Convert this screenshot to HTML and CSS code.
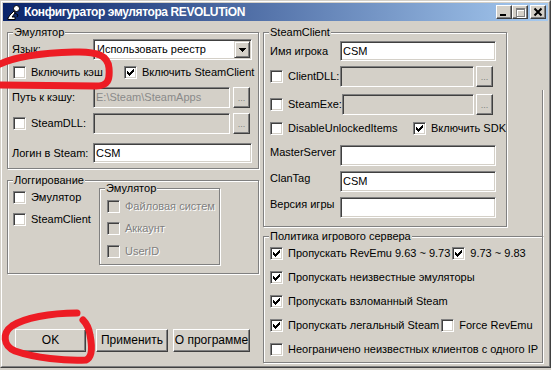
FILE: index.html
```html
<!DOCTYPE html>
<html lang="ru">
<head>
  <meta charset="UTF-8">
  <meta name="viewport" content="width=device-width, initial-scale=1.0">
  <title>Конфигуратор эмулятора REVOLUTiON</title>
  <link rel="stylesheet" href="styles.css">
</head>
<body>
  <div class="window">
    <div class="frame">
      <div class="titlebar">
        <svg class="app-icon" width="16" height="16" viewBox="0 0 16 16">
          <circle cx="11.5" cy="4.5" r="3" fill="#fff" stroke="#000"/>
          <path d="M9 7 L5 11 L3 14 L3 15.5 L10 15.5 L10 13 L7 13 L10 9 Z" fill="#fff" stroke="#000" stroke-linejoin="round"/>
          <path d="M10 9 L13 11 L12 13" fill="none" stroke="#000"/>
        </svg>
        <span class="title">Конфигуратор эмулятора REVOLUTiON</span>
        <div class="caption">
          <span class="cap-btn">
            <svg width="14" height="12" viewBox="0 0 14 12" shape-rendering="crispEdges"><rect x="3" y="8" width="6" height="2" fill="#000"/></svg>
          </span>
          <span class="cap-btn">
            <svg width="14" height="12" viewBox="0 0 14 12" shape-rendering="crispEdges">
              <path d="M3 2h9v9h-9z M4 4v6h7v-6z" fill="#fff" fill-rule="evenodd" transform="translate(1 1)"/>
              <path d="M3 2h9v9h-9z M4 4v6h7v-6z" fill="#808080" fill-rule="evenodd"/>
            </svg>
          </span>
          <span class="cap-btn close">
            <svg width="14" height="12" viewBox="0 0 14 12"><path d="M3.5 2.5 L10.5 9.5 M10.5 2.5 L3.5 9.5" stroke="#000" stroke-width="2" fill="none"/></svg>
          </span>
        </div>
      </div>

      <div class="client">
        <div class="col-left">
          <div class="group emu">
            <span class="legend">Эмулятор</span>
            <div class="row lang">
              <span class="lbl">Язык:</span>
              <div class="combo">
                <span class="combo-text">Использовать реестр</span>
                <span class="drop"><svg width="7" height="4" viewBox="0 0 7 4" shape-rendering="crispEdges"><path d="M0 0h7v1h-1v1h-1v1h-1v1h-1v-1h-1v-1h-1v-1h-1z" fill="#000"/></svg></span>
              </div>
            </div>
            <div class="row checks">
              <label class="check cache"><span class="cb"></span>Включить кэш</label>
              <label class="check"><span class="cb"><svg width="7" height="7" viewBox="0 0 7 7" shape-rendering="crispEdges"><path d="M6 0h1v3h-1v1h-1v1h-1v1h-1v1h-1v-1h-1v-1h-1v-3h1v1h1v1h1v-1h1v-1h1z" fill="#000"/></svg></span>Включить SteamClient</label>
            </div>
            <div class="row path">
              <span class="lbl">Путь к кэшу:</span>
              <div class="edit off short">E:\Steam\SteamApps</div>
              <span class="browse">...</span>
            </div>
            <div class="row path dll">
              <label class="lbl check"><span class="cb"></span>SteamDLL:</label>
              <div class="edit off short"></div>
              <span class="browse">...</span>
            </div>
            <div class="row login">
              <span class="lbl">Логин в Steam:</span>
              <div class="edit wide">CSM</div>
            </div>
          </div>

          <div class="group log">
            <span class="legend">Логгирование</span>
            <div class="log-body">
              <div class="log-checks">
                <label class="check"><span class="cb"></span>Эмулятор</label>
                <label class="check"><span class="cb"></span>SteamClient</label>
              </div>
              <div class="group sub">
                <span class="legend">Эмулятор</span>
                <label class="check off"><span class="cb"></span>Файловая систем</label>
                <label class="check off"><span class="cb"></span>Аккаунт</label>
                <label class="check off"><span class="cb"></span>UserID</label>
              </div>
            </div>
          </div>

          <div class="buttons">
            <span class="btn ok">OK</span>
            <span class="btn apply">Применить</span>
            <span class="btn about">О программе</span>
          </div>
        </div>

        <div class="col-right">
          <div class="top-row">
            <div class="group steam">
              <span class="legend">SteamClient</span>
              <div class="row name">
                <span class="lbl">Имя игрока</span>
                <div class="edit wide">CSM</div>
              </div>
              <div class="row file">
                <label class="lbl check"><span class="cb"></span>ClientDLL:</label>
                <div class="edit off"></div>
                <span class="browse">...</span>
              </div>
              <div class="row file exe">
                <label class="lbl check"><span class="cb"></span>SteamExe:</label>
                <div class="edit off"></div>
                <span class="browse">...</span>
              </div>
              <div class="row checks">
                <label class="check unlocked"><span class="cb"></span>DisableUnlockedItems</label>
                <label class="check"><span class="cb"><svg width="7" height="7" viewBox="0 0 7 7" shape-rendering="crispEdges"><path d="M6 0h1v3h-1v1h-1v1h-1v1h-1v1h-1v-1h-1v-1h-1v-3h1v1h1v1h1v-1h1v-1h1z" fill="#000"/></svg></span>Включить SDK</label>
              </div>
              <div class="row field first">
                <span class="lbl">MasterServer</span>
                <div class="edit wide"></div>
              </div>
              <div class="row field">
                <span class="lbl">ClanTag</span>
                <div class="edit wide">CSM</div>
              </div>
              <div class="row field">
                <span class="lbl">Версия игры</span>
                <div class="edit wide"></div>
              </div>
            </div>
            <div class="ghost"></div>
          </div>

          <div class="group policy">
            <span class="legend">Политика игрового сервера</span>
            <div class="prow">
              <label class="check"><span class="cb"><svg width="7" height="7" viewBox="0 0 7 7" shape-rendering="crispEdges"><path d="M6 0h1v3h-1v1h-1v1h-1v1h-1v1h-1v-1h-1v-1h-1v-3h1v1h1v1h1v-1h1v-1h1z" fill="#000"/></svg></span>Пропускать RevEmu 9.63 ~ 9.73</label>
              <label class="check tight"><span class="cb"><svg width="7" height="7" viewBox="0 0 7 7" shape-rendering="crispEdges"><path d="M6 0h1v3h-1v1h-1v1h-1v1h-1v1h-1v-1h-1v-1h-1v-3h1v1h1v1h1v-1h1v-1h1z" fill="#000"/></svg></span>9.73 ~ 9.83</label>
            </div>
            <div class="prow">
              <label class="check"><span class="cb"><svg width="7" height="7" viewBox="0 0 7 7" shape-rendering="crispEdges"><path d="M6 0h1v3h-1v1h-1v1h-1v1h-1v1h-1v-1h-1v-1h-1v-3h1v1h1v1h1v-1h1v-1h1z" fill="#000"/></svg></span>Пропускать неизвестные эмуляторы</label>
            </div>
            <div class="prow">
              <label class="check"><span class="cb"><svg width="7" height="7" viewBox="0 0 7 7" shape-rendering="crispEdges"><path d="M6 0h1v3h-1v1h-1v1h-1v1h-1v1h-1v-1h-1v-1h-1v-3h1v1h1v1h1v-1h1v-1h1z" fill="#000"/></svg></span>Пропускать взломанный Steam</label>
            </div>
            <div class="prow">
              <label class="check"><span class="cb"><svg width="7" height="7" viewBox="0 0 7 7" shape-rendering="crispEdges"><path d="M6 0h1v3h-1v1h-1v1h-1v1h-1v1h-1v-1h-1v-1h-1v-3h1v1h1v1h1v-1h1v-1h1z" fill="#000"/></svg></span>Пропускать легальный Steam</label>
              <label class="check tight"><span class="cb"></span>Force RevEmu</label>
            </div>
            <div class="prow">
              <label class="check"><span class="cb"></span>Неограничено неизвестных клиентов с одного IP</label>
            </div>
          </div>
        </div>
      </div>
    </div>
  </div>

  <!-- red marker scribbles over the screenshot -->
  <svg class="marks" width="551" height="370" viewBox="0 0 551 370">
    <path d="M-4 66 C 12 57 40 53 74 52 C 98 51 108 56 109 68 C 110 80 108 86 96 86 L -4 85" />
    <path d="M77 313 C 50 313 24 318 12 326 C 2 333 3 346 15 351 C 35 358 65 361 86 360 C 93 357 92 345 90 335 C 89 328 87 324 83 320" />
  </svg>
</body>
</html>
```

FILE: styles.css
```css
* {
  margin: 0;
  padding: 0;
  box-sizing: border-box;
}

body {
  position: relative;
  width: 551px;
  height: 370px;
  background: #d4d0c8;
  font-family: 'Liberation Sans', Arial, sans-serif;
  font-size: 11px;
  line-height: 13px;
  color: #000;
  overflow: hidden;
}

.window {
  width: 551px;
  height: 368px;
  border: 1px solid;
  border-color: #d4d0c8 #404040 #404040 #d4d0c8;
}

.frame {
  height: 100%;
  border: 1px solid;
  border-color: #fff #808080 #808080 #fff;
  padding: 1px;
}

/* title bar */
.titlebar {
  display: flex;
  align-items: center;
  height: 18px;
  padding-left: 2px;
  background: linear-gradient(to right, #0a246a, #a6caf0);
}

.app-icon {
  flex: none;
  margin-right: 3px;
}

.title {
  color: #fff;
  font-weight: bold;
  font-size: 12px;
  letter-spacing: -0.4px;
  white-space: nowrap;
}

.caption {
  display: flex;
  margin-left: auto;
  margin-right: 2px;
}

.cap-btn {
  width: 16px;
  height: 14px;
  background: #d4d0c8;
  border: 1px solid;
  border-color: #fff #404040 #404040 #fff;
  box-shadow: inset -1px -1px 0 #808080;
  display: flex;
}

.cap-btn.close {
  margin-left: 2px;
}

/* client area */
.client {
  display: flex;
  padding: 11px 0 0 4px;
}

.col-left {
  width: 252px;
  flex: none;
}

.col-right {
  width: 280px;
  flex: none;
  margin-left: 4px;
}

.group {
  position: relative;
  border: 1px solid #808080;
  box-shadow: inset 1px 1px 0 #fff, 1px 1px 0 #fff;
}

.legend {
  position: absolute;
  top: -7px;
  left: 5px;
  padding: 0 1px;
  background: #d4d0c8;
  white-space: nowrap;
}

.row {
  display: flex;
  align-items: center;
}

.lbl {
  flex: none;
  white-space: nowrap;
}

.check {
  display: flex;
  align-items: center;
  height: 13px;
  white-space: nowrap;
}

.cb {
  flex: none;
  width: 13px;
  height: 13px;
  margin-right: 5px;
  background: #fff;
  border: 1px solid;
  border-color: #808080 #fff #fff #808080;
  box-shadow: inset 1px 1px 0 #404040, inset -1px -1px 0 #d4d0c8;
  display: flex;
  align-items: center;
  justify-content: center;
}

.check.off {
  color: #808080;
  text-shadow: 1px 1px 0 #fff;
}

.check.off .cb {
  background: #d4d0c8;
}

.edit {
  height: 100%;
  background: #fff;
  border: 1px solid;
  border-color: #808080 #fff #fff #808080;
  box-shadow: inset 1px 1px 0 #404040, inset -1px -1px 0 #d4d0c8;
  padding: 0 2px;
  display: flex;
  align-items: center;
  white-space: nowrap;
  overflow: hidden;
}

.edit.off {
  background: #d4d0c8;
  color: #8a8a8a;
}

.browse {
  flex: none;
  width: 17px;
  height: 100%;
  background: #d4d0c8;
  border: 1px solid;
  border-color: #fff #404040 #404040 #fff;
  box-shadow: inset -1px -1px 0 #808080;
  color: #808080;
  font-size: 9px;
  line-height: 9px;
  display: flex;
  align-items: flex-end;
  justify-content: center;
  padding-bottom: 4px;
}

/* Эмулятор */
.emu {
  height: 137px;
  padding-left: 4px;
}

.emu .lbl {
  width: 81px;
}

.emu .lang {
  height: 21px;
  margin-top: 6px;
}

.combo {
  display: flex;
  align-items: center;
  width: 159px;
  height: 21px;
  background: #fff;
  border: 1px solid;
  border-color: #808080 #fff #fff #808080;
  box-shadow: inset 1px 1px 0 #404040, inset -1px -1px 0 #d4d0c8;
  padding: 1px;
}

.combo-text {
  padding-left: 2px;
  white-space: nowrap;
}

.drop {
  margin-left: auto;
  width: 16px;
  height: 17px;
  background: #d4d0c8;
  border: 1px solid;
  border-color: #d4d0c8 #404040 #404040 #d4d0c8;
  box-shadow: inset 1px 1px 0 #fff, inset -1px -1px 0 #808080;
  display: flex;
  align-items: center;
  justify-content: center;
}

.emu .checks {
  height: 13px;
  margin: 6px 0 0 1px;
}

.emu .cache {
  width: 111px;
}

.emu .path {
  height: 21px;
  margin-top: 8px;
}

.emu .dll {
  margin-top: 5px;
}

.emu .dll .lbl {
  width: 80px;
  margin-left: 1px;
}

.edit.short {
  width: 137px;
  margin-right: 3px;
}

.emu .login {
  height: 20px;
  margin-top: 9px;
}

.emu .edit.wide {
  width: 159px;
}

/* Логгирование */
.log {
  height: 94px;
  margin-top: 11px;
}

.log-body {
  display: flex;
}

.log-checks {
  width: 86px;
  margin: 10px 0 0 5px;
  display: flex;
  flex-direction: column;
  gap: 9px;
}

.sub {
  width: 121px;
  height: 77px;
  margin-top: 7px;
  padding: 11px 0 0 7px;
  display: flex;
  flex-direction: column;
  gap: 9px;
}

.sub .check:last-child {
  margin-top: 1px;
}

/* кнопки */
.buttons {
  display: flex;
  margin: 55px 0 0 8px;
}

.btn {
  height: 23px;
  background: #d4d0c8;
  border: 1px solid;
  border-color: #fff #404040 #404040 #fff;
  box-shadow: inset -1px -1px 0 #808080;
  display: flex;
  align-items: center;
  justify-content: center;
  font-size: 12px;
  white-space: nowrap;
}

.btn.ok {
  width: 71px;
  margin-right: 10px;
}

.btn.apply {
  width: 72px;
  margin-right: 5px;
}

.btn.about {
  width: 77px;
}

/* SteamClient */
.top-row {
  display: flex;
}

.steam {
  width: 244px;
  height: 195px;
  flex: none;
  padding-left: 6px;
}

.steam .lbl {
  width: 70px;
}

.steam .edit.wide {
  width: 156px;
}

.steam .name {
  height: 20px;
  margin-top: 8px;
}

.steam .file {
  height: 21px;
  margin-top: 5px;
}

.steam .file .edit {
  width: 134px;
  margin-right: 2px;
}

.steam .exe {
  margin-top: 7px;
}

.steam .exe .lbl {
  width: 72px;
}

.steam .exe .edit {
  width: 132px;
}

.steam .checks {
  height: 13px;
  margin-top: 7px;
}

.steam .unlocked {
  width: 143px;
}

.steam .field {
  height: 21px;
  margin-top: 5px;
  align-items: flex-start;
}

.steam .field.first {
  margin-top: 10px;
}

.steam .field .lbl {
  padding-top: 1px;
}

.ghost {
  flex: 1;
  margin: 58px 0 -9px;
  border-right: 1px solid #808080;
  box-shadow: 1px 0 0 #fff;
}

/* Политика */
.policy {
  height: 127px;
  margin-top: 9px;
  padding: 10px 0 0 6px;
  display: flex;
  flex-direction: column;
  gap: 11px;
}

.prow {
  display: flex;
  height: 13px;
}

.check.tight .cb {
  margin-left: 2px;
}

/* красные пометки */
.marks {
  position: absolute;
  top: 0;
  left: 0;
  pointer-events: none;
}

.marks path {
  fill: none;
  stroke: #ed1c24;
  stroke-width: 7;
  stroke-linecap: round;
  stroke-linejoin: round;
}
```
